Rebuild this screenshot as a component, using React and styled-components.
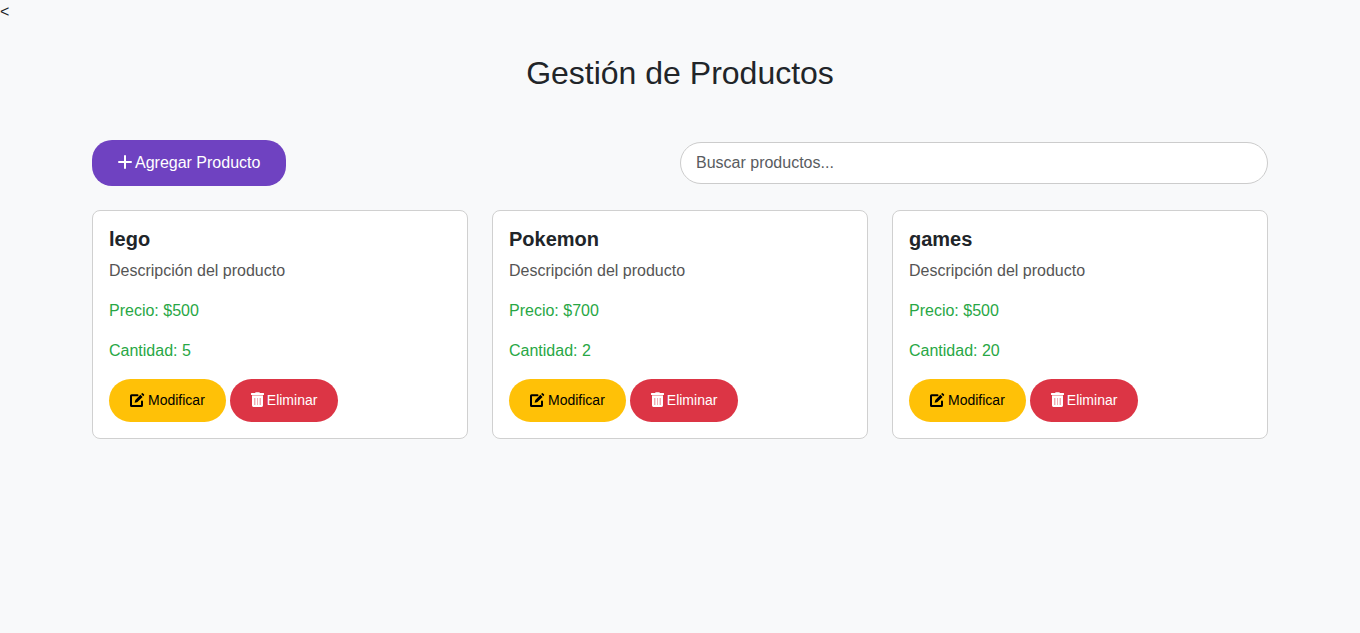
import React from "react";
import styled, { createGlobalStyle } from "styled-components";

const GlobalStyle = createGlobalStyle`
  *, *::before, *::after { box-sizing: border-box; }
  body {
    margin: 0;
    background: #f8f9fa;
    color: #212529;
    font-family: "Liberation Sans", Arial, sans-serif;
    font-size: 16px;
    line-height: 24px;
  }
`;

const Container = styled.main`
  max-width: 1200px;
  margin: 0 auto;
  padding: 30px 12px;
`;

const Title = styled.h1`
  margin: 0 0 48px;
  font-size: 32px;
  font-weight: 400;
  line-height: 38px;
  text-align: center;
`;

const Toolbar = styled.div`
  display: grid;
  grid-template-columns: 1fr 1fr;
  align-items: center;
  margin-bottom: 24px;
`;

const themes = {
  add: "background: #6f42c1; color: #fff;",
  edit: "background: #ffc107; color: #000;",
  remove: "background: #dc3545; color: #fff;",
};

const Button = styled.button`
  display: inline-flex;
  align-items: center;
  justify-self: start;
  gap: 3px;
  border: 0;
  border-radius: ${({ $large }) => ($large ? "20px" : "25px")};
  padding: ${({ $large }) => ($large ? "11px 26px" : "11px 21px")};
  font-family: inherit;
  font-size: ${({ $large }) => ($large ? "16px" : "14px")};
  line-height: ${({ $large }) => ($large ? "24px" : "21px")};
  white-space: nowrap;
  cursor: pointer;
  ${({ $kind }) => themes[$kind]}
`;

const Icon = styled.svg.attrs({ "aria-hidden": true })`
  flex: none;
  margin-bottom: 2px;
`;

const SearchInput = styled.input`
  width: 100%;
  height: 42px;
  padding: 8px 15px;
  border: 1px solid #ccc;
  border-radius: 25px;
  background: #fff;
  color: #212529;
  font: inherit;

  &::placeholder {
    color: #595c5f;
    opacity: 1;
  }
`;

const ProductGrid = styled.section`
  display: grid;
  grid-template-columns: repeat(3, 1fr);
  gap: 24px;
`;

const Card = styled.article`
  padding: 16px;
  border: 1px solid #d0d0d0;
  border-radius: 8px;
  background: #fff;
`;

const ProductName = styled.h2`
  margin: 0 0 8px;
  font-size: 20px;
  font-weight: 700;
  line-height: 24px;
`;

const Detail = styled.p`
  margin: 0 0 16px;
  color: ${({ $accent }) => ($accent ? "#28a745" : "#555")};
`;

const Actions = styled.div`
  display: flex;
  flex-wrap: wrap;
  gap: 4px;
`;

const PlusIcon = () => (
  <Icon width="14" height="14" viewBox="0 0 14 14">
    <path
      d="M7 1V13M1 7H13"
      fill="none"
      stroke="currentColor"
      strokeWidth="2"
      strokeLinecap="round"
    />
  </Icon>
);

const EditIcon = () => (
  <Icon width="15" height="14" viewBox="0 0 15 14">
    <path
      d="M7.5 2.2H1.6Q1 2.2 1 2.8V12.4Q1 13 1.6 13H11.4Q12 13 12 12.4V8.5"
      fill="none"
      stroke="currentColor"
      strokeWidth="2"
      strokeLinecap="round"
    />
    <path
      d="M10.4 1.7 12.6 3.9 7.7 8.8Q7.4 9.1 7 9.2L4.6 9.8 5.2 7.4Q5.3 7 5.6 6.7ZM11.1 1 11.7.4Q12.4-.2 13.1.4L13.9 1.2Q14.5 1.9 13.9 2.6L13.3 3.2Z"
      fill="currentColor"
    />
  </Icon>
);

const TrashIcon = () => (
  <Icon width="13" height="15" viewBox="0 0 13 15">
    <path
      d="M4 1 4.4.6Q4.6.3 5 .3H8Q8.4.3 8.6.6L9 1H12.5Q13 1 13 1.5V2.5Q13 3 12.5 3H.5Q0 3 0 2.5V1.5Q0 1 .5 1Z"
      fill="currentColor"
    />
    <path
      fillRule="evenodd"
      d="M1 4H12V13.6Q12 15 10.6 15H2.4Q1 15 1 13.6ZM3.2 6V13H4.2V6ZM6 6V13H7V6ZM8.8 6V13H9.8V6Z"
      fill="currentColor"
    />
    <path
      d="M1 3H12V4H1ZM3.2 6V13H4.2V6ZM6 6V13H7V6ZM8.8 6V13H9.8V6Z"
      fill="currentColor"
      opacity=".6"
    />
  </Icon>
);

const products = [
  { name: "lego", price: 500, quantity: 5 },
  { name: "Pokemon", price: 700, quantity: 2 },
  { name: "games", price: 500, quantity: 20 },
];

function ProductCard({ name, price, quantity }) {
  return (
    <Card>
      <ProductName>{name}</ProductName>
      <Detail>Descripción del producto</Detail>
      <Detail $accent>{`Precio: $${price}`}</Detail>
      <Detail $accent>{`Cantidad: ${quantity}`}</Detail>
      <Actions>
        <Button type="button" $kind="edit">
          <EditIcon />
          Modificar
        </Button>
        <Button type="button" $kind="remove">
          <TrashIcon />
          Eliminar
        </Button>
      </Actions>
    </Card>
  );
}

export default function App() {
  return (
    <>
      <GlobalStyle />
      {"<"}
      <Container>
        <Title>Gestión de Productos</Title>
        <Toolbar>
          <Button type="button" $kind="add" $large>
            <PlusIcon />
            Agregar Producto
          </Button>
          <SearchInput
            type="text"
            aria-label="Buscar productos"
            placeholder="Buscar productos..."
          />
        </Toolbar>
        <ProductGrid>
          {products.map((product) => (
            <ProductCard key={product.name} {...product} />
          ))}
        </ProductGrid>
      </Container>
    </>
  );
}
